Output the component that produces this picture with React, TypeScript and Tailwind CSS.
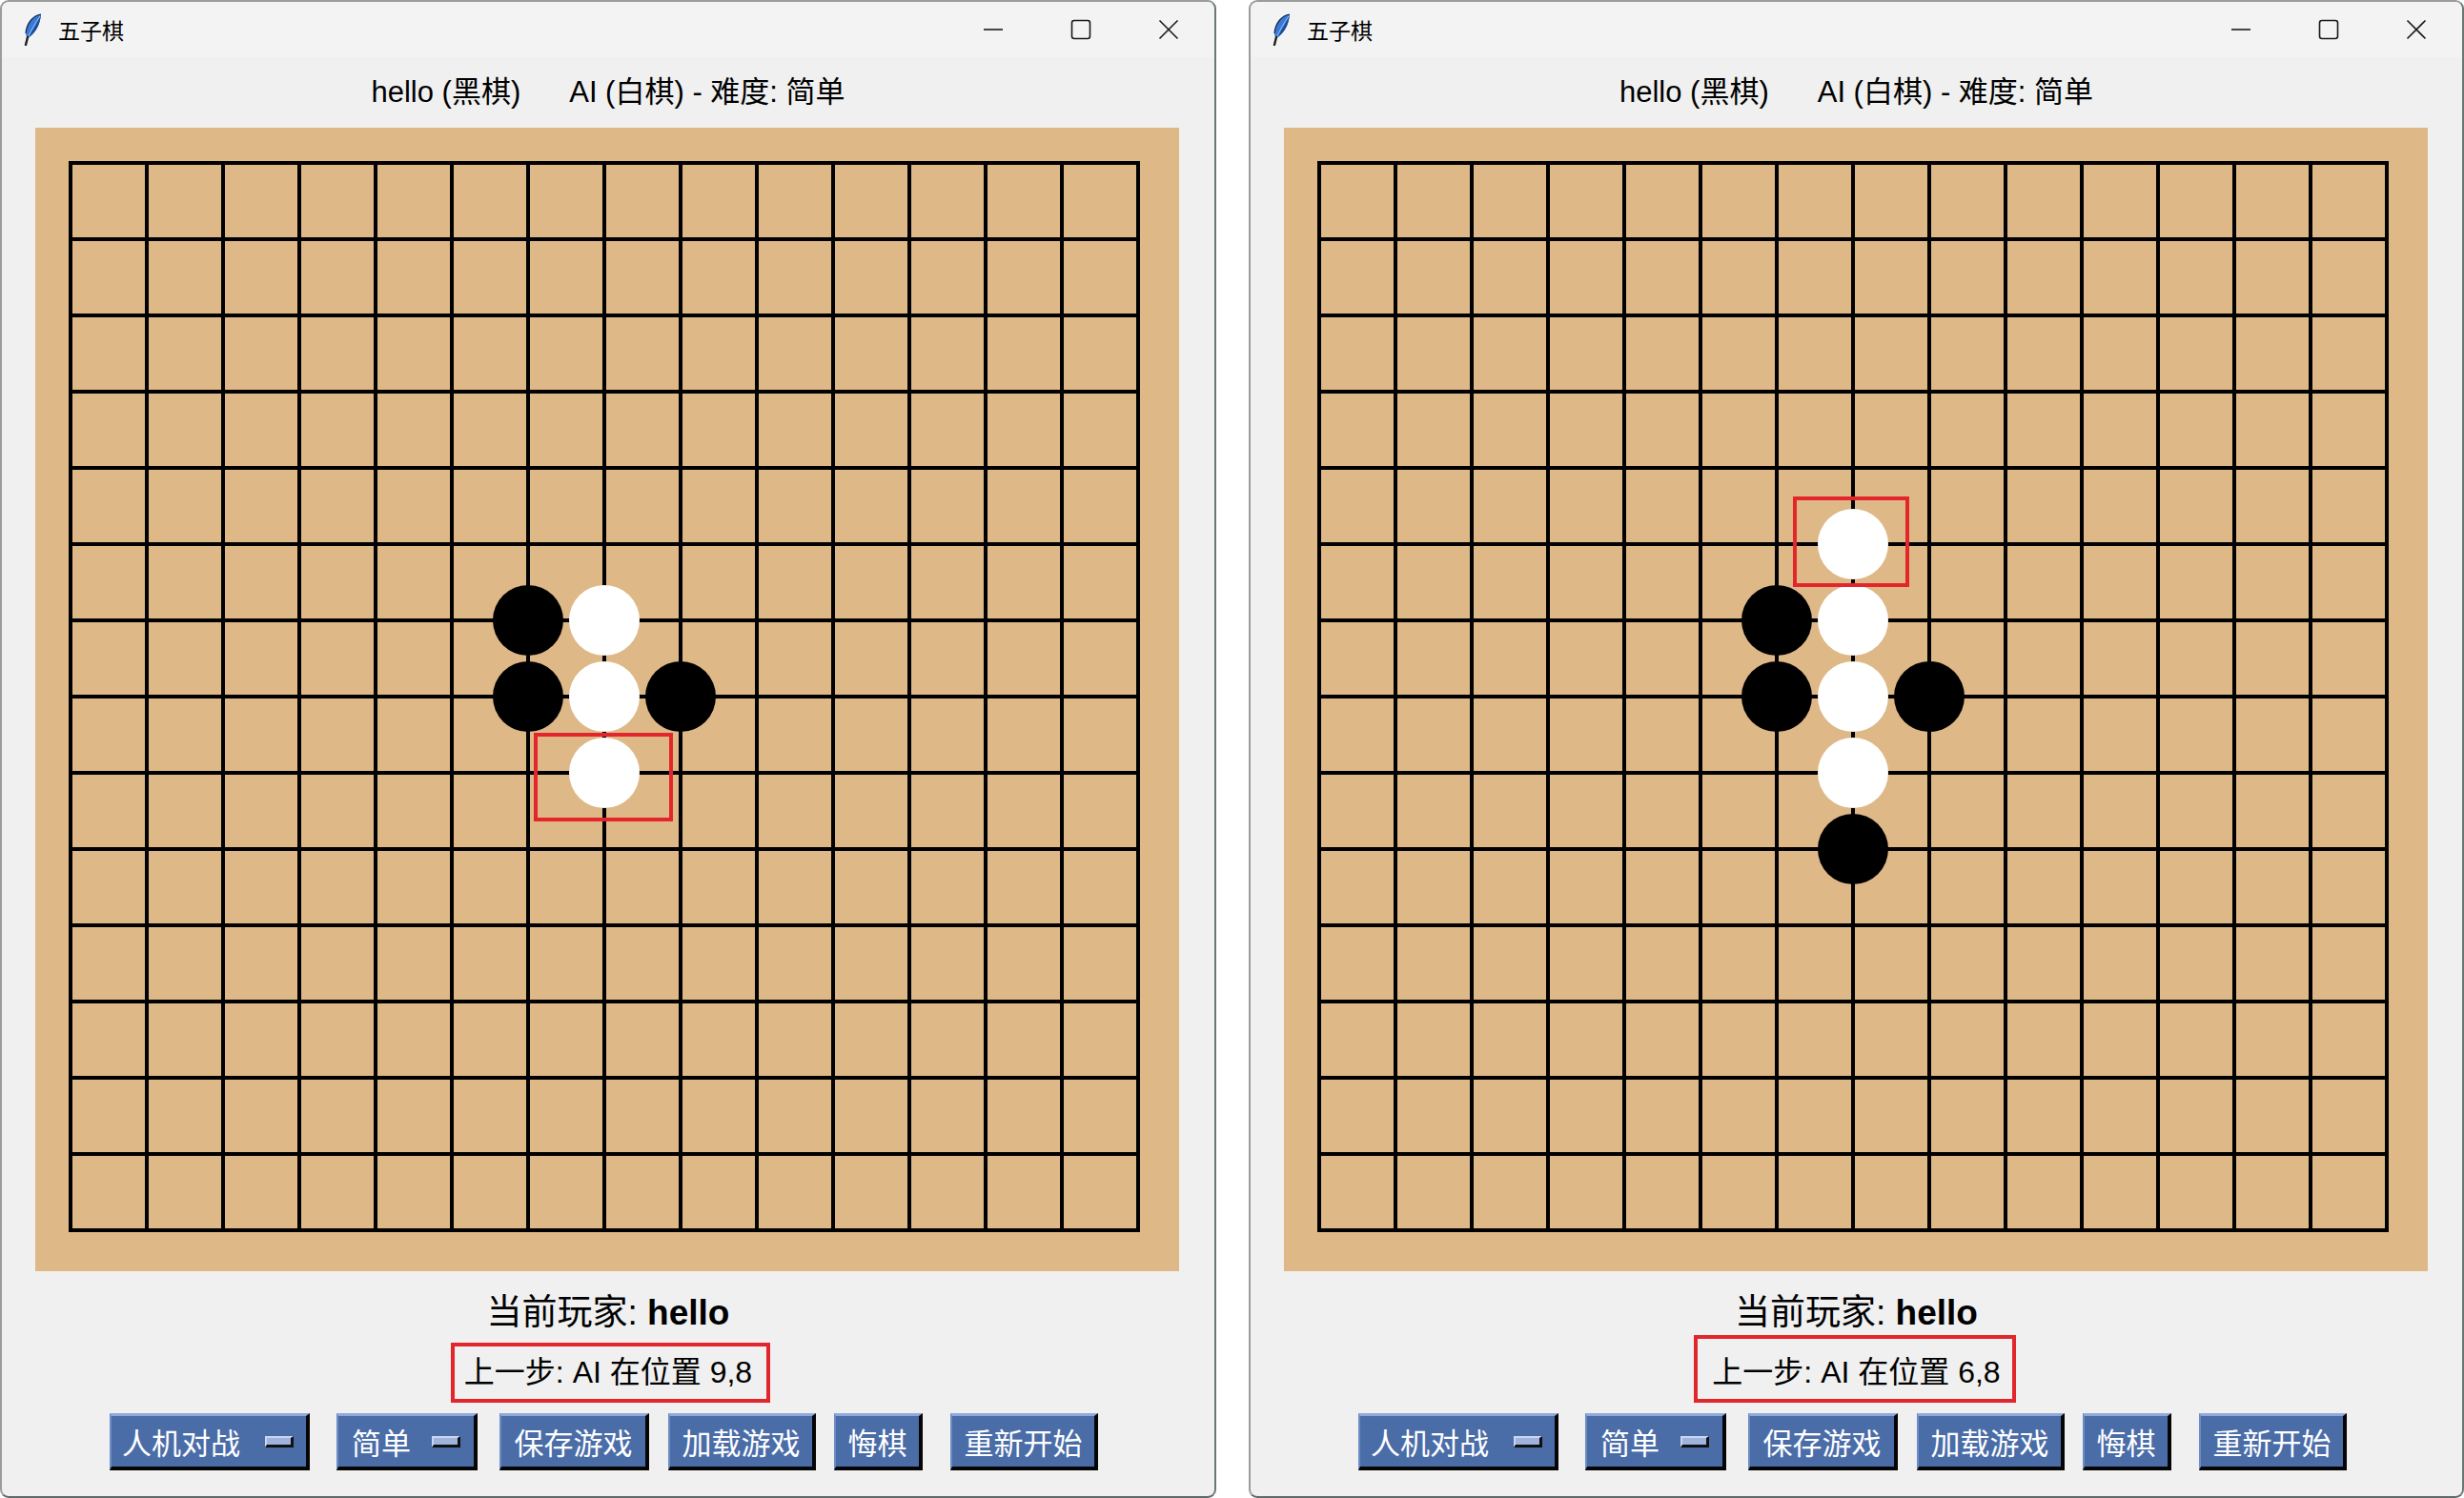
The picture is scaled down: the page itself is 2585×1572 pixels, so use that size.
import React from 'react';

type Stone = { c: number; r: number; w: boolean };
type Box = { x: number; y: number; w: number; h: number };

function Feather() {
  return (
    <svg width="22" height="34" viewBox="0 0 22 34" className="block">
      <path d="M20 1 C12 2 5 10 4 21 C4 23 5 25 6 26 C13 22 19 13 20 1 Z" fill="#3a78d4" />
      <path d="M20 1 C17 9 12 17 6 26 C13 22 19 13 20 1 Z" fill="#1b4a96" />
      <path d="M20 1 C12 2 5 10 4 21" stroke="#0d2550" strokeWidth="1.2" fill="none" />
      <path d="M19 3 C14 10 10 17 6 26" stroke="#9cc4f4" strokeWidth="1" fill="none" />
      <path d="M6 25 L4 33" stroke="#1e1e1e" strokeWidth="2.4" strokeLinecap="round" />
    </svg>
  );
}

function TitleBar() {
  return (
    <div className="h-[58px] bg-[#f3f3f3] flex items-center shrink-0 rounded-t-[8px]">
      <div className="ml-[21px] w-[22px] flex items-center">
        <Feather />
      </div>
      <div className="ml-[16px] text-[23px] text-black [font-family:'Noto_Sans_CJK_SC',sans-serif] leading-none">五子棋</div>
      <div className="ml-auto flex h-full mr-[2px]">
        <div className="w-[92px] h-full flex items-center justify-center">
          <svg width="22" height="22" viewBox="0 0 22 22"><line x1="1" y1="11" x2="21" y2="11" stroke="#1a1a1a" strokeWidth="1.6" /></svg>
        </div>
        <div className="w-[92px] h-full flex items-center justify-center">
          <svg width="22" height="22" viewBox="0 0 22 22"><rect x="1.5" y="1.5" width="19" height="19" rx="2.5" fill="none" stroke="#1a1a1a" strokeWidth="1.6" /></svg>
        </div>
        <div className="w-[92px] h-full flex items-center justify-center">
          <svg width="22" height="22" viewBox="0 0 22 22"><path d="M1.5 1.5 L20.5 20.5 M20.5 1.5 L1.5 20.5" stroke="#1a1a1a" strokeWidth="1.6" /></svg>
        </div>
      </div>
    </div>
  );
}

function Board({ stones, box }: { stones: Stone[]; box: Box }) {
  const idx = Array.from({ length: 15 }, (_, i) => i);
  return (
    <div className="ml-[35px] w-[1200px] h-[1200px] bg-[#deb887] shrink-0">
      <svg width="1200" height="1200" className="block">
        {idx.map((i) => (
          <line key={'h' + i} x1={37} x2={1157} y1={37 + i * 80} y2={37 + i * 80} stroke="#000" strokeWidth={4} strokeLinecap="square" />
        ))}
        {idx.map((i) => (
          <line key={'v' + i} y1={37} y2={1157} x1={37 + i * 80} x2={37 + i * 80} stroke="#000" strokeWidth={4} strokeLinecap="square" />
        ))}
        {stones.map((s, i) => (
          <circle key={i} cx={37 + s.c * 80} cy={37 + s.r * 80} r={37} fill={s.w ? '#ffffff' : '#000000'} />
        ))}
        <rect x={box.x} y={box.y} width={box.w} height={box.h} fill="none" stroke="#e3262b" strokeWidth={4} />
      </svg>
    </div>
  );
}

function Indicator() {
  return (
    <span className="inline-block w-[30px] h-[12px] bg-[#9fb3dd] border-t-2 border-l-2 border-t-[#c9d6f0] border-l-[#c9d6f0] border-b-[3px] border-r-[3px] border-b-[#111] border-r-[#111]" />
  );
}

const btn =
  "h-[60px] bg-[#4a6da8] text-white text-[31px] leading-none flex items-center border-t-[3px] border-l-[2px] border-t-[#90a9dc] border-l-[#6d8cc4] border-b-[4px] border-r-[4px] border-b-[#050505] border-r-[#050505] [font-family:'Noto_Sans_CJK_SC',sans-serif] shrink-0";

function Buttons() {
  return (
    <div className="flex items-start ml-[113px] mt-[23px]">
      <div className={btn + ' w-[210px] pl-[11px] pr-[13px] justify-between'}>
        <span>人机对战</span>
        <Indicator />
      </div>
      <div className={btn + ' w-[148px] ml-[28px] pl-[14px] pr-[14px] justify-between'}>
        <span>简单</span>
        <Indicator />
      </div>
      <div className={btn + ' w-[157px] ml-[23px] justify-center'}>保存游戏</div>
      <div className={btn + ' w-[155px] ml-[20px] justify-center'}>加载游戏</div>
      <div className={btn + ' w-[93px] ml-[19px] justify-center'}>悔棋</div>
      <div className={btn + ' w-[155px] ml-[29px] justify-center'}>重新开始</div>
    </div>
  );
}

function GameWindow({ stones, box, move, red, width }: { stones: Stone[]; box: Box; move: string; red: Box; width: string }) {
  return (
    <div className={width + ' relative h-[1572px] bg-[#f0f0f0] border-2 border-[#9c9c9c] border-b-[#5e6a6a] border-r-[#6a7676] rounded-[9px] flex flex-col shrink-0'}>
      <TitleBar />
      <div className="h-[74px] flex items-center justify-center gap-[51px] text-[31px] text-black [font-family:'Liberation_Sans','Noto_Sans_CJK_SC',sans-serif] shrink-0">
        <span>hello (黑棋)</span>
        <span>AI (白棋) - 难度: 简单</span>
      </div>
      <Board stones={stones} box={box} />
      <div className="mt-[22px] h-[44px] flex items-center justify-center text-[37px] text-black [font-family:'Liberation_Sans','Noto_Sans_CJK_SC',sans-serif] shrink-0">
        <span>当前玩家: <span className="font-bold">hello</span></span>
      </div>
      <div className="mt-[20px] h-[40px] flex items-center justify-center text-[32px] text-black [font-family:'Liberation_Sans','Noto_Sans_CJK_SC',sans-serif] shrink-0">
        <span>上一步: AI 在位置 {move}</span>
      </div>
      <Buttons />
      <div
        className="absolute border-[4px] border-[#e3262b]"
        style={{ left: red.x, top: red.y, width: red.w, height: red.h }}
      />
    </div>
  );
}

export default function App() {
  const leftStones: Stone[] = [
    { c: 6, r: 6, w: false },
    { c: 7, r: 6, w: true },
    { c: 6, r: 7, w: false },
    { c: 7, r: 7, w: true },
    { c: 8, r: 7, w: false },
    { c: 7, r: 8, w: true },
  ];
  const rightStones: Stone[] = [
    { c: 7, r: 5, w: true },
    { c: 6, r: 6, w: false },
    { c: 7, r: 6, w: true },
    { c: 6, r: 7, w: false },
    { c: 7, r: 7, w: true },
    { c: 8, r: 7, w: false },
    { c: 7, r: 8, w: true },
    { c: 7, r: 9, w: false },
  ];
  return (
    <div className="w-[2585px] h-[1572px] bg-white flex justify-between overflow-hidden">
      <GameWindow
        width="w-[1276px]"
        stones={leftStones}
        box={{ x: 525, y: 637, w: 142, h: 89 }}
        move="9,8"
        red={{ x: 471, y: 1407, w: 335, h: 63 }}
      />
      <GameWindow
        width="w-[1275px]"
        stones={rightStones}
        box={{ x: 536, y: 389, w: 118, h: 91 }}
        move="6,8"
        red={{ x: 465, y: 1399, w: 338, h: 71 }}
      />
    </div>
  );
}
